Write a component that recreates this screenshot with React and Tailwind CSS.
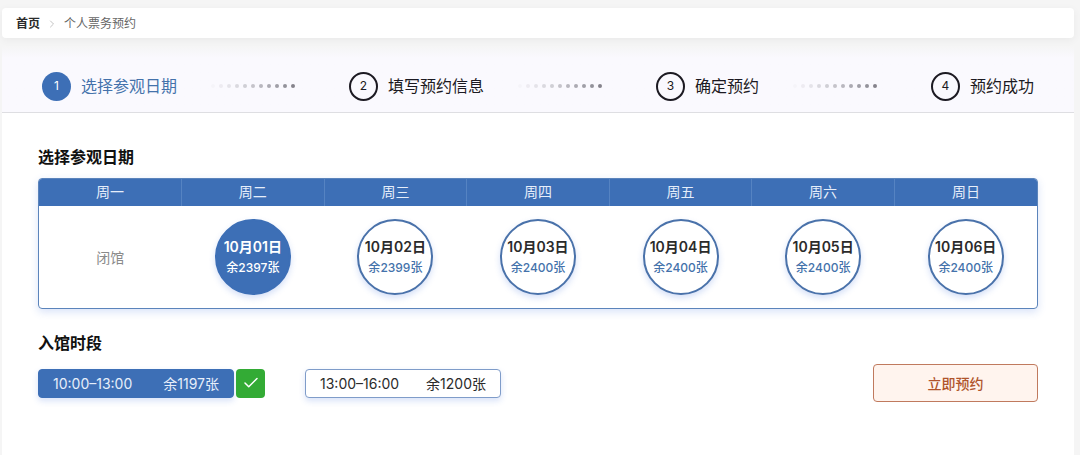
import React, { useState } from "react";
import { Check, ChevronRight } from "lucide-react";

const STEPS = ["选择参观日期", "填写预约信息", "确定预约", "预约成功"];

const DAYS = [
  { week: "周一", closed: true },
  { week: "周二", date: "10月01日", left: 2397 },
  { week: "周三", date: "10月02日", left: 2399 },
  { week: "周四", date: "10月03日", left: 2400 },
  { week: "周五", date: "10月04日", left: 2400 },
  { week: "周六", date: "10月05日", left: 2400 },
  { week: "周日", date: "10月06日", left: 2400 },
];

const SLOTS = [
  { time: "10:00–13:00", left: 1197 },
  { time: "13:00–16:00", left: 1200 },
];

const DOTS = Array.from({ length: 11 }, (_, i) => (i + 1) / 11);

function Breadcrumb() {
  return (
    <nav
      aria-label="面包屑"
      className="flex h-[30px] items-center gap-1.5 rounded-sm bg-white px-3.5 pt-0.5 text-[12px] shadow-[0_2px_8px_rgba(0,0,0,0.05)]"
    >
      <a href="#" className="font-bold text-[#2b2b2b]">
        首页
      </a>
      <ChevronRight className="size-3 text-[#c4c4c4]" strokeWidth={2} />
      <span className="text-[#666]">个人票务预约</span>
    </nav>
  );
}

function StepDots() {
  return (
    <li aria-hidden="true" className="flex flex-1 justify-center gap-1 pr-5">
      {DOTS.map((d) => (
        <span
          key={d}
          className="size-1 rounded-full bg-[#85838c]"
          style={{ opacity: Math.pow(d, 1.3) }}
        />
      ))}
    </li>
  );
}

function Steps({ current }) {
  return (
    <ol className="flex h-[67px] items-center border-b border-[#dedee2] bg-linear-to-b from-[#f5f5f5] to-[#faf9fe] to-[12px] px-10 pt-3.5">
      {STEPS.map((label, i) => (
        <React.Fragment key={label}>
          {i > 0 && <StepDots />}
          <li
            aria-current={i === current ? "step" : undefined}
            className={`flex items-center gap-2.5 ${
              i === current ? "text-[#4472ab]" : "text-[#1c1a22]"
            }`}
          >
            <span
              className={`flex size-[29px] items-center justify-center rounded-full text-[12px] ${
                i === current
                  ? "bg-[#3d6fb6] text-white"
                  : "border-2 border-[#1c1a22]"
              }`}
            >
              {i + 1}
            </span>
            <span className="text-base">{label}</span>
          </li>
        </React.Fragment>
      ))}
    </ol>
  );
}

function DayButton({ day, active, onClick }) {
  return (
    <button
      type="button"
      aria-pressed={active}
      onClick={onClick}
      className={`inline-flex size-[76px] flex-col items-center justify-center rounded-full border-2 whitespace-nowrap shadow-[0_3px_6px_rgba(61,111,220,0.22)] ${
        active
          ? "border-[#3d6fb6] bg-[#3d6fb6] text-white"
          : "border-[#4a72aa] bg-white text-[#2b2b2b]"
      }`}
    >
      <span className="text-[14px] leading-[22px] font-semibold">
        {day.date}
      </span>
      <span
        className={`text-[12px] leading-5 font-medium ${
          active ? "text-white" : "text-[#4472ab]"
        }`}
      >
        余{day.left}张
      </span>
    </button>
  );
}

function Calendar({ selected, onSelect }) {
  return (
    <div className="overflow-hidden rounded border border-[#5b84bb] shadow-[0_3px_8px_rgba(61,111,220,0.2)]">
      <table className="w-full table-fixed border-collapse text-center">
        <thead>
          <tr className="bg-[#3d6fb6] text-[14px] text-[#e6eefa]">
            {DAYS.map((day) => (
              <th
                key={day.week}
                scope="col"
                className="h-[27px] border-l border-[#5583c2] p-0 pb-0.5 leading-5 font-normal first:border-l-0"
              >
                {day.week}
              </th>
            ))}
          </tr>
        </thead>
        <tbody>
          <tr>
            {DAYS.map((day, i) => (
              <td key={day.week} className="h-[102px] p-0 align-middle">
                {day.closed ? (
                  <span className="text-[14px] text-[#8a8a8a]">闭馆</span>
                ) : (
                  <div className="flex justify-center">
                    <DayButton
                      day={day}
                      active={i === selected}
                      onClick={() => onSelect(i)}
                    />
                  </div>
                )}
              </td>
            ))}
          </tr>
        </tbody>
      </table>
    </div>
  );
}

function Slot({ slot, active, onClick }) {
  return (
    <div className="flex gap-0.5">
      <button
        type="button"
        aria-pressed={active}
        onClick={onClick}
        className={`flex h-[29px] w-[196px] items-center justify-between rounded border px-3.5 text-[14px] whitespace-nowrap shadow-[0_3px_6px_rgba(61,111,220,0.2)] ${
          active
            ? "border-[#3d6fb6] bg-[#3d6fb6] text-[#e6eefa]"
            : "border-[#7f9cc9] bg-white text-[#2b2b2b]"
        }`}
      >
        <span>{slot.time}</span>
        <span>余{slot.left}张</span>
      </button>
      {active && (
        <span className="flex size-[29px] items-center justify-center rounded bg-[#33ab35] text-white">
          <Check className="size-[18px]" strokeWidth={2} />
        </span>
      )}
    </div>
  );
}

export default function App() {
  const [day, setDay] = useState(1);
  const [slot, setSlot] = useState(0);

  return (
    <div className="flex min-h-screen flex-col gap-2 bg-[#f5f5f5] pt-2 pr-1.5 pl-0.5 font-[Inter,'Noto_Sans_CJK_SC',sans-serif]">
      <Breadcrumb />

      <main className="flex flex-1 flex-col bg-white">
        <Steps current={0} />

        <div className="px-9 pt-8">
          <h2 className="mb-[9px] text-base leading-6 font-bold text-[#111]">
            选择参观日期
          </h2>
          <Calendar selected={day} onSelect={setDay} />

          <h2 className="mt-[22px] mb-[9px] text-base leading-6 font-bold text-[#111]">
            入馆时段
          </h2>
          <div className="flex items-center justify-between">
            <div className="flex gap-10">
              {SLOTS.map((s, i) => (
                <Slot
                  key={s.time}
                  slot={s}
                  active={i === slot}
                  onClick={() => setSlot(i)}
                />
              ))}
            </div>
            <button
              type="button"
              className="h-[38px] w-[165px] rounded border border-[#c07a5e] bg-[#fff4ee] text-[14px] font-medium text-[#b0542c]"
            >
              立即预约
            </button>
          </div>
        </div>
      </main>
    </div>
  );
}
